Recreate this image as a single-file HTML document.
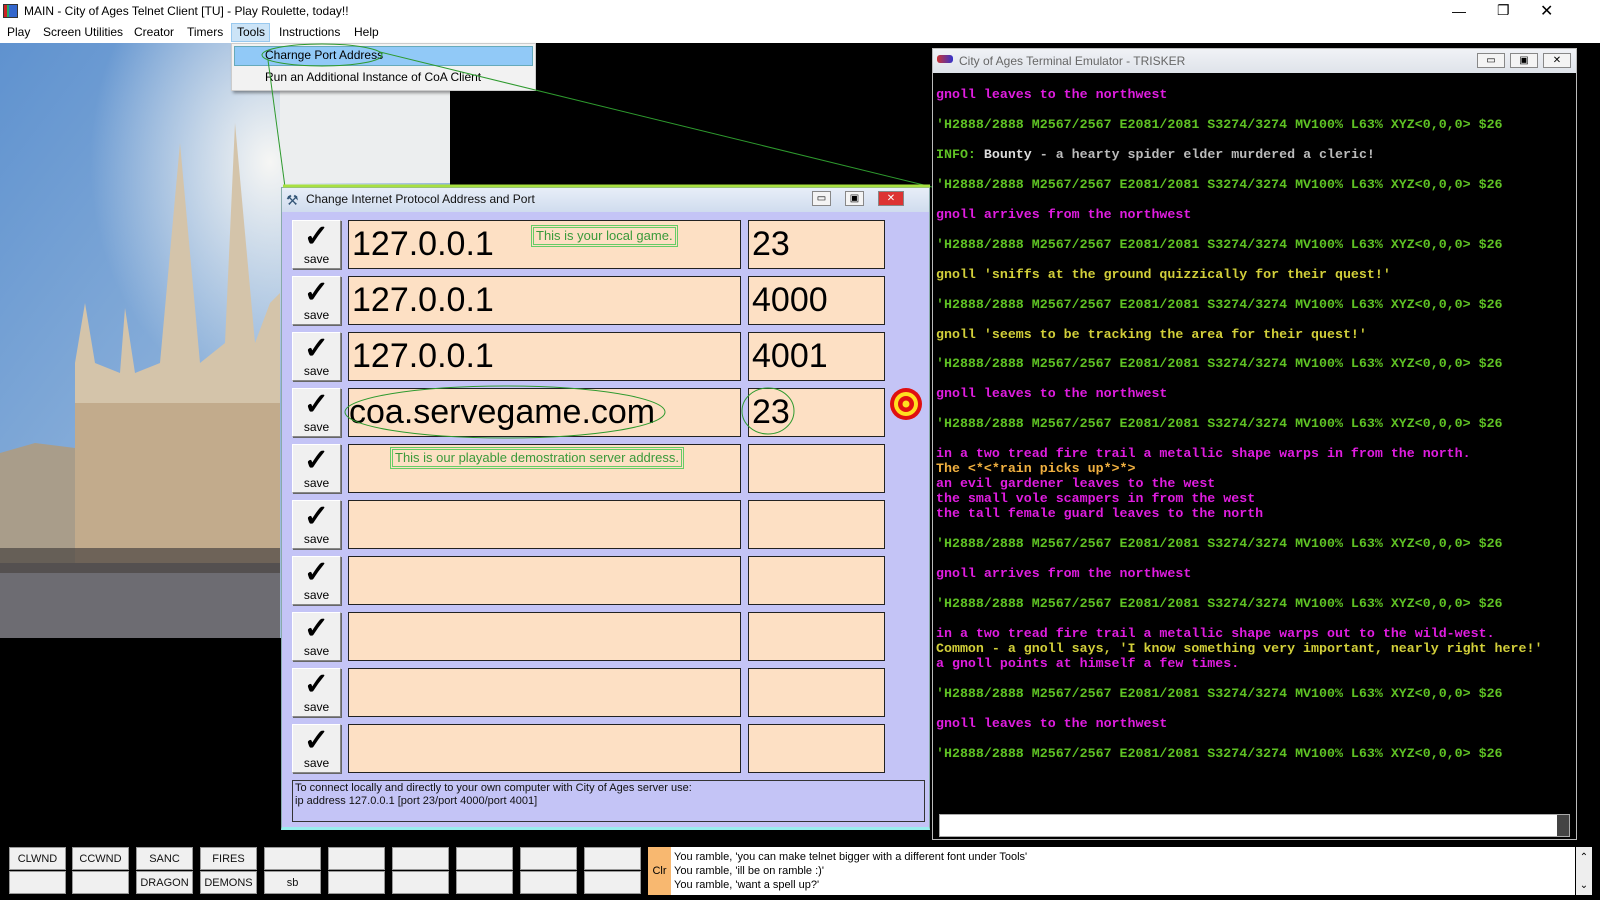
<!DOCTYPE html>
<html><head><meta charset="utf-8"><style>
*{margin:0;padding:0;box-sizing:border-box}
body{width:1600px;height:900px;background:#000;position:relative;overflow:hidden;font-family:"Liberation Sans",sans-serif}
.abs{position:absolute}
#title{left:0;top:0;width:1600px;height:22px;background:#fff;font-size:12px;line-height:22px;padding-left:24px;color:#000}
#menu{left:0;top:22px;width:1600px;height:21px;background:#fff;font-size:12px;line-height:21px}
#menu span{position:absolute;top:0}
.dd{left:231px;top:43px;width:305px;height:48px;background:#f2f2f2;border:1px solid #ccc;box-shadow:2px 2px 3px rgba(0,0,0,.4);font-size:12px}
#dlg{left:281px;top:187px;width:649px;height:643px;background:#c4c4f6;border:1px solid #8aa;border-bottom:3px solid #9ee}
#dlg .tb{position:absolute;left:0;top:0;width:100%;height:24px;background:linear-gradient(#e8eef8,#d0dcee);font-size:12px;line-height:22px;padding-left:24px;color:#111}
.sv{position:absolute;left:10px;width:49px;height:49px;background:#f0f0f0;border:1px solid #888;border-top-color:#fff;border-left-color:#fff;box-shadow:1px 1px 0 #666;text-align:center;font-size:12px}
.sv b{display:block;font-size:30px;line-height:30px;font-weight:bold;margin-top:1px}
.ad{position:absolute;left:66px;width:393px;height:49px;background:#fde0c4;border:1px solid #222;font-size:34px;line-height:47px;padding-left:3px}
.pt{position:absolute;left:466px;width:137px;height:49px;background:#fde0c4;border:1px solid #222;font-size:34px;line-height:47px;padding-left:3px}
.tip{position:absolute;border:3px double #6c6;background:#fde0c4;color:#3a9a3a;font-size:13px;line-height:16px;padding:0 2px}
#term{left:932px;top:48px;width:645px;height:792px;background:#000;border:1px solid #bbb}
#term .tb{position:absolute;left:0;top:0;width:100%;height:24px;background:linear-gradient(#f0f2f6,#dfe3ea);font-size:12px;line-height:24px;padding-left:26px;color:#666}
pre{position:absolute;left:3px;top:39px;font-family:"Liberation Mono",monospace;font-weight:bold;font-size:13.3px;line-height:14.97px;color:#e01de0}
.g{color:#5fc224}.y{color:#d2cf3a}.o{color:#f0b040}.w{color:#ddd}.gr{color:#bbb}
.wb{position:absolute;width:19px;height:15px;border:1px solid #888;background:#f4f4f4;top:4px;font-size:10px;text-align:center;line-height:13px}
.bb{position:absolute;width:57px;height:23px;background:#f0f0f0;border:1px solid #999;font-family:"Liberation Sans Narrow","Liberation Sans",sans-serif;font-size:11px;text-align:center;line-height:22px;color:#111}
#msg{left:671px;top:847px;width:904px;height:48px;background:#fff;font-family:"Liberation Sans Narrow","Liberation Sans",sans-serif;font-size:11px;line-height:14px;padding:3px 3px}
</style></head><body>
<div id="title" class="abs">MAIN - City of Ages Telnet Client [TU] - Play Roulette, today!!</div>
<div class="abs" style="left:3px;top:4px;width:15px;height:14px;background:linear-gradient(90deg,#c22 0 3px,#2a6 3px 5px,#36c 5px);border:1px solid #333"></div>
<div class="abs" style="left:1452px;top:3px;font-size:14px">—</div>
<div class="abs" style="left:1497px;top:2px;font-size:14px">❐</div>
<div class="abs" style="left:1540px;top:1px;font-size:16px">✕</div>
<div id="menu" class="abs">
<span style="left:7px">Play</span><span style="left:43px">Screen Utilities</span><span style="left:134px">Creator</span><span style="left:187px">Timers</span>
<span style="left:231px;top:1px;height:19px;width:39px;background:#cce4f7;border:1px solid #99c9ef;line-height:17px;padding-left:5px">Tools</span>
<span style="left:279px">Instructions</span><span style="left:354px">Help</span></div>
<!-- photo -->
<svg class="abs" style="left:0;top:43px" width="450" height="595">
<defs><linearGradient id="sky" x1="0" y1="0" x2="1" y2="1"><stop offset="0" stop-color="#5f92cf"/><stop offset="1" stop-color="#b4cce4"/></linearGradient>
<radialGradient id="cl" cx=".6" cy=".2" r=".4"><stop offset="0" stop-color="#f6f6f4"/><stop offset="1" stop-color="#f6f6f4" stop-opacity="0"/></radialGradient></defs>
<rect width="450" height="595" fill="url(#sky)"/>
<rect width="450" height="595" fill="url(#cl)"/>
<rect x="280" y="0" width="170" height="140" fill="#eceeef"/>
<polygon points="0,410 35,400 75,405 75,560 0,560" fill="#a99d8a"/>
<polygon points="75,320 85,260 95,320 120,330 125,265 135,330 160,320 180,100 200,320 225,300 235,80 255,300 270,260 280,250 280,540 75,540" fill="#d4c4aa"/>
<rect x="75" y="360" width="205" height="180" fill="#c2ab8c"/>
<rect x="0" y="520" width="280" height="75" fill="#6d6c72"/>
<rect x="0" y="505" width="280" height="25" fill="#4a4442" opacity=".7"/>
</svg>
<div class="abs dd"><div style="position:absolute;left:2px;top:2px;width:299px;height:20px;background:#91c9f7;border:1px solid #6ab"></div>
<div style="position:absolute;left:33px;top:4px">Charnge Port Address</div>
<div style="position:absolute;left:33px;top:26px">Run an Additional Instance of CoA Client</div></div>
<!-- dialog -->
<div id="dlg" class="abs"><div class="tb">Change Internet Protocol Address and Port</div>
<div style="position:absolute;left:4px;top:4px;font-size:14px;color:#357">⚒</div>
<div class="wb" style="left:530px;top:3px">▭</div><div class="wb" style="left:563px;top:3px">▣</div><div class="wb" style="left:596px;top:3px;width:26px;background:#d33;color:#fff">✕</div>
<div class="sv" style="top:32px"><b>✓</b>save</div><div class="ad" style="top:32px">127.0.0.1</div><div class="pt" style="top:32px">23</div>
<div class="sv" style="top:88px"><b>✓</b>save</div><div class="ad" style="top:88px">127.0.0.1</div><div class="pt" style="top:88px">4000</div>
<div class="sv" style="top:144px"><b>✓</b>save</div><div class="ad" style="top:144px">127.0.0.1</div><div class="pt" style="top:144px">4001</div>
<div class="sv" style="top:200px"><b>✓</b>save</div><div class="ad" style="top:200px;padding-left:0">coa.servegame.com</div><div class="pt" style="top:200px">23</div>
<div class="sv" style="top:256px"><b>✓</b>save</div><div class="ad" style="top:256px"></div><div class="pt" style="top:256px"></div>
<div class="sv" style="top:312px"><b>✓</b>save</div><div class="ad" style="top:312px"></div><div class="pt" style="top:312px"></div>
<div class="sv" style="top:368px"><b>✓</b>save</div><div class="ad" style="top:368px"></div><div class="pt" style="top:368px"></div>
<div class="sv" style="top:424px"><b>✓</b>save</div><div class="ad" style="top:424px"></div><div class="pt" style="top:424px"></div>
<div class="sv" style="top:480px"><b>✓</b>save</div><div class="ad" style="top:480px"></div><div class="pt" style="top:480px"></div>
<div class="sv" style="top:536px"><b>✓</b>save</div><div class="ad" style="top:536px"></div><div class="pt" style="top:536px"></div>
<div class="tip" style="left:249px;top:37px">This is your local game.</div>
<div class="tip" style="left:108px;top:259px">This is our playable demostration server address.</div>
<div style="position:absolute;left:10px;top:592px;width:633px;height:42px;border:1px solid #333;font-family:'Liberation Sans Narrow','Liberation Sans',sans-serif;font-size:11px;line-height:13px;padding:1px 2px;color:#111">To connect locally and directly to your own computer with City of Ages server use:<br>ip address 127.0.0.1 [port 23/port 4000/port 4001]</div>
</div>
<svg class="abs" style="left:0;top:0" width="1600" height="900">
<g fill="none" stroke="#2e9a2e" stroke-width="1">
<ellipse cx="322" cy="55" rx="60" ry="11"/>
<line x1="268" y1="60" x2="285" y2="187"/>
<line x1="380" y1="52" x2="932" y2="187"/>
<ellipse cx="505" cy="412" rx="160" ry="26"/>
<ellipse cx="768" cy="411" rx="26" ry="23"/>
</g>
<line x1="283" y1="186" x2="930" y2="186" stroke="#a8e040" stroke-width="3"/>
<circle cx="906" cy="404" r="16" fill="#e01010"/><circle cx="906" cy="404" r="12" fill="#ffe020"/><circle cx="906" cy="404" r="8" fill="#e01010"/><circle cx="906" cy="404" r="3.5" fill="#ffe020"/>
</svg>
<!-- terminal -->
<div id="term" class="abs"><div class="tb">City of Ages Terminal Emulator - TRISKER</div>
<div style="position:absolute;left:4px;top:6px;width:16px;height:8px;background:linear-gradient(90deg,#c33,#33c);border-radius:3px"></div>
<div class="wb" style="left:544px;width:28px">▭</div><div class="wb" style="left:577px;width:28px">▣</div><div class="wb" style="left:610px;width:28px">✕</div>
<pre>gnoll leaves to the northwest

<span class="g">'H2888/2888 M2567/2567 E2081/2081 S3274/3274 MV100% L63% XYZ&lt;0,0,0&gt; $26</span>

<span class="g">INFO: </span><span class="w">Bounty</span><span class="gr"> - a hearty spider elder murdered a cleric!</span>

<span class="g">'H2888/2888 M2567/2567 E2081/2081 S3274/3274 MV100% L63% XYZ&lt;0,0,0&gt; $26</span>

gnoll arrives from the northwest

<span class="g">'H2888/2888 M2567/2567 E2081/2081 S3274/3274 MV100% L63% XYZ&lt;0,0,0&gt; $26</span>

<span class="y">gnoll 'sniffs at the ground quizzically for their quest!'</span>

<span class="g">'H2888/2888 M2567/2567 E2081/2081 S3274/3274 MV100% L63% XYZ&lt;0,0,0&gt; $26</span>

<span class="y">gnoll 'seems to be tracking the area for their quest!'</span>

<span class="g">'H2888/2888 M2567/2567 E2081/2081 S3274/3274 MV100% L63% XYZ&lt;0,0,0&gt; $26</span>

gnoll leaves to the northwest

<span class="g">'H2888/2888 M2567/2567 E2081/2081 S3274/3274 MV100% L63% XYZ&lt;0,0,0&gt; $26</span>

in a two tread fire trail a metallic shape warps in from the north.
<span class="o">The &lt;*&lt;*rain picks up*&gt;*&gt;</span>
an evil gardener leaves to the west
the small vole scampers in from the west
the tall female guard leaves to the north

<span class="g">'H2888/2888 M2567/2567 E2081/2081 S3274/3274 MV100% L63% XYZ&lt;0,0,0&gt; $26</span>

gnoll arrives from the northwest

<span class="g">'H2888/2888 M2567/2567 E2081/2081 S3274/3274 MV100% L63% XYZ&lt;0,0,0&gt; $26</span>

in a two tread fire trail a metallic shape warps out to the wild-west.
<span class="y">Common - a gnoll says, 'I know something very important, nearly right here!'</span>
a gnoll points at himself a few times.

<span class="g">'H2888/2888 M2567/2567 E2081/2081 S3274/3274 MV100% L63% XYZ&lt;0,0,0&gt; $26</span>

gnoll leaves to the northwest

<span class="g">'H2888/2888 M2567/2567 E2081/2081 S3274/3274 MV100% L63% XYZ&lt;0,0,0&gt; $26</span></pre>
<div style="position:absolute;left:6px;top:765px;width:631px;height:23px;background:#fff;border:1px solid #aaa"></div>
<div style="position:absolute;left:624px;top:766px;width:12px;height:21px;background:#444"></div>
</div>
<!-- bottom buttons -->
<div class="bb" style="left:9px;top:847px">CLWND</div><div class="bb" style="left:9px;top:871px"></div>
<div class="bb" style="left:72px;top:847px">CCWND</div><div class="bb" style="left:72px;top:871px"></div>
<div class="bb" style="left:136px;top:847px">SANC</div><div class="bb" style="left:136px;top:871px">DRAGON</div>
<div class="bb" style="left:200px;top:847px">FIRES</div><div class="bb" style="left:200px;top:871px">DEMONS</div>
<div class="bb" style="left:264px;top:847px"></div><div class="bb" style="left:264px;top:871px">sb</div>
<div class="bb" style="left:328px;top:847px"></div><div class="bb" style="left:328px;top:871px"></div>
<div class="bb" style="left:392px;top:847px"></div><div class="bb" style="left:392px;top:871px"></div>
<div class="bb" style="left:456px;top:847px"></div><div class="bb" style="left:456px;top:871px"></div>
<div class="bb" style="left:520px;top:847px"></div><div class="bb" style="left:520px;top:871px"></div>
<div class="bb" style="left:584px;top:847px"></div><div class="bb" style="left:584px;top:871px"></div>
<div class="abs" style="left:648px;top:847px;width:23px;height:48px;background:#f8b870;font-size:11px;line-height:48px;text-align:center">Clr</div>
<div id="msg" class="abs">You ramble, 'you can make telnet bigger with a different font under Tools'<br>You ramble, 'ill be on ramble :)'<br>You ramble, 'want a spell up?'</div>
<div class="abs" style="left:1576px;top:847px;width:16px;height:48px;background:#eee;font-size:10px;text-align:center;line-height:14px;padding-top:4px">⌃<br><br>⌄</div>
</body></html>
